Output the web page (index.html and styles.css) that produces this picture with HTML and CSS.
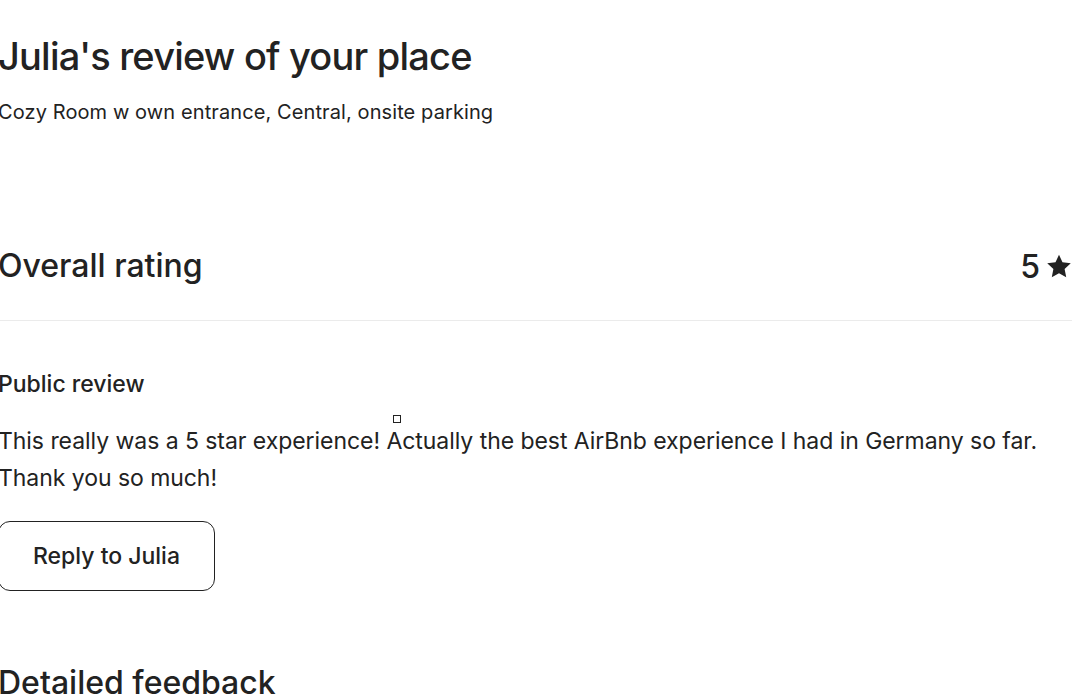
FILE: index.html
```html
<!DOCTYPE html>
<html lang="en">
<head>
<meta charset="utf-8">
<title>Julia's review of your place</title>
<link rel="stylesheet" href="styles.css">
</head>
<body>
<main class="page">
  <header class="head">
    <h1 class="title">Julia's review of your place</h1>
    <p class="listing">Cozy Room w own entrance, Central, onsite parking</p>
  </header>
  <section class="overall">
    <h2 class="section-title">Overall rating</h2>
    <div class="score">5
      <svg class="star" viewBox="0 0 32 32" aria-hidden="true"><path d="M16 2.2l4.3 9.3 10.2 1.2-7.6 7 2 10.1L16 24.8l-8.9 5 2-10.1-7.6-7 10.2-1.2z"/></svg>
    </div>
  </section>
  <section class="public">
    <h3 class="sub-title">Public review</h3>
    <p class="review">This really was a 5 star experience! Actually the best AirBnb experience I had in Germany so far. Thank you so much!</p>
    <button class="reply" type="button">Reply to Julia</button>
    <span class="cursor"></span>
  </section>
  <section class="detailed">
    <h2 class="section-title">Detailed feedback</h2>
  </section>
</main>
</body>
</html>
```
FILE: styles.css
```css
html, body {
  margin: 0;
  padding: 0;
  background: #fff;
}
body {
  font-family: Inter, "Noto Sans", "Liberation Sans", sans-serif;
  color: #222222;
  overflow: hidden;
}
.page {
  width: 1074px;
  margin-left: -2px;
}
.head {
  padding-top: 32px;
}
.title {
  margin: 0;
  font-size: 38px;
  line-height: 48px;
  font-weight: 500;
  letter-spacing: -0.8px;
}
.listing {
  margin: 18px 0 0;
  font-size: 20px;
  line-height: 28px;
  font-weight: 400;
  letter-spacing: 0.1px;
}
.overall {
  margin-top: 120px;
  display: flex;
  justify-content: space-between;
  align-items: center;
  padding-bottom: 34px;
  border-bottom: 1px solid #ebebeb;
}
.section-title {
  margin: 0;
  font-size: 32px;
  line-height: 40px;
  font-weight: 500;
  letter-spacing: 0;
}
.score {
  display: flex;
  align-items: center;
  gap: 6px;
  font-size: 32px;
  font-weight: 500;
}
.star {
  width: 26px;
  height: 26px;
  fill: #222222;
}
.public {
  position: relative;
  padding-top: 48px;
}
.sub-title {
  margin: 0;
  font-size: 23px;
  line-height: 30px;
  font-weight: 500;
}
.review {
  margin: 24px 0 0;
  font-size: 23px;
  line-height: 37px;
  font-weight: 400;
  letter-spacing: -0.05px;
}
.reply {
  margin-top: 24px;
  height: 70px;
  padding: 0 34px;
  background: #fff;
  border: 1px solid #222222;
  border-radius: 12px;
  font-family: inherit;
  font-size: 23px;
  font-weight: 500;
  color: #222222;
}
.cursor {
  position: absolute;
  left: 395px;
  top: 94px;
  width: 6px;
  height: 6px;
  border: 1px solid #222;
  background: #fff;
}
.detailed {
  margin-top: 72px;
}
```
